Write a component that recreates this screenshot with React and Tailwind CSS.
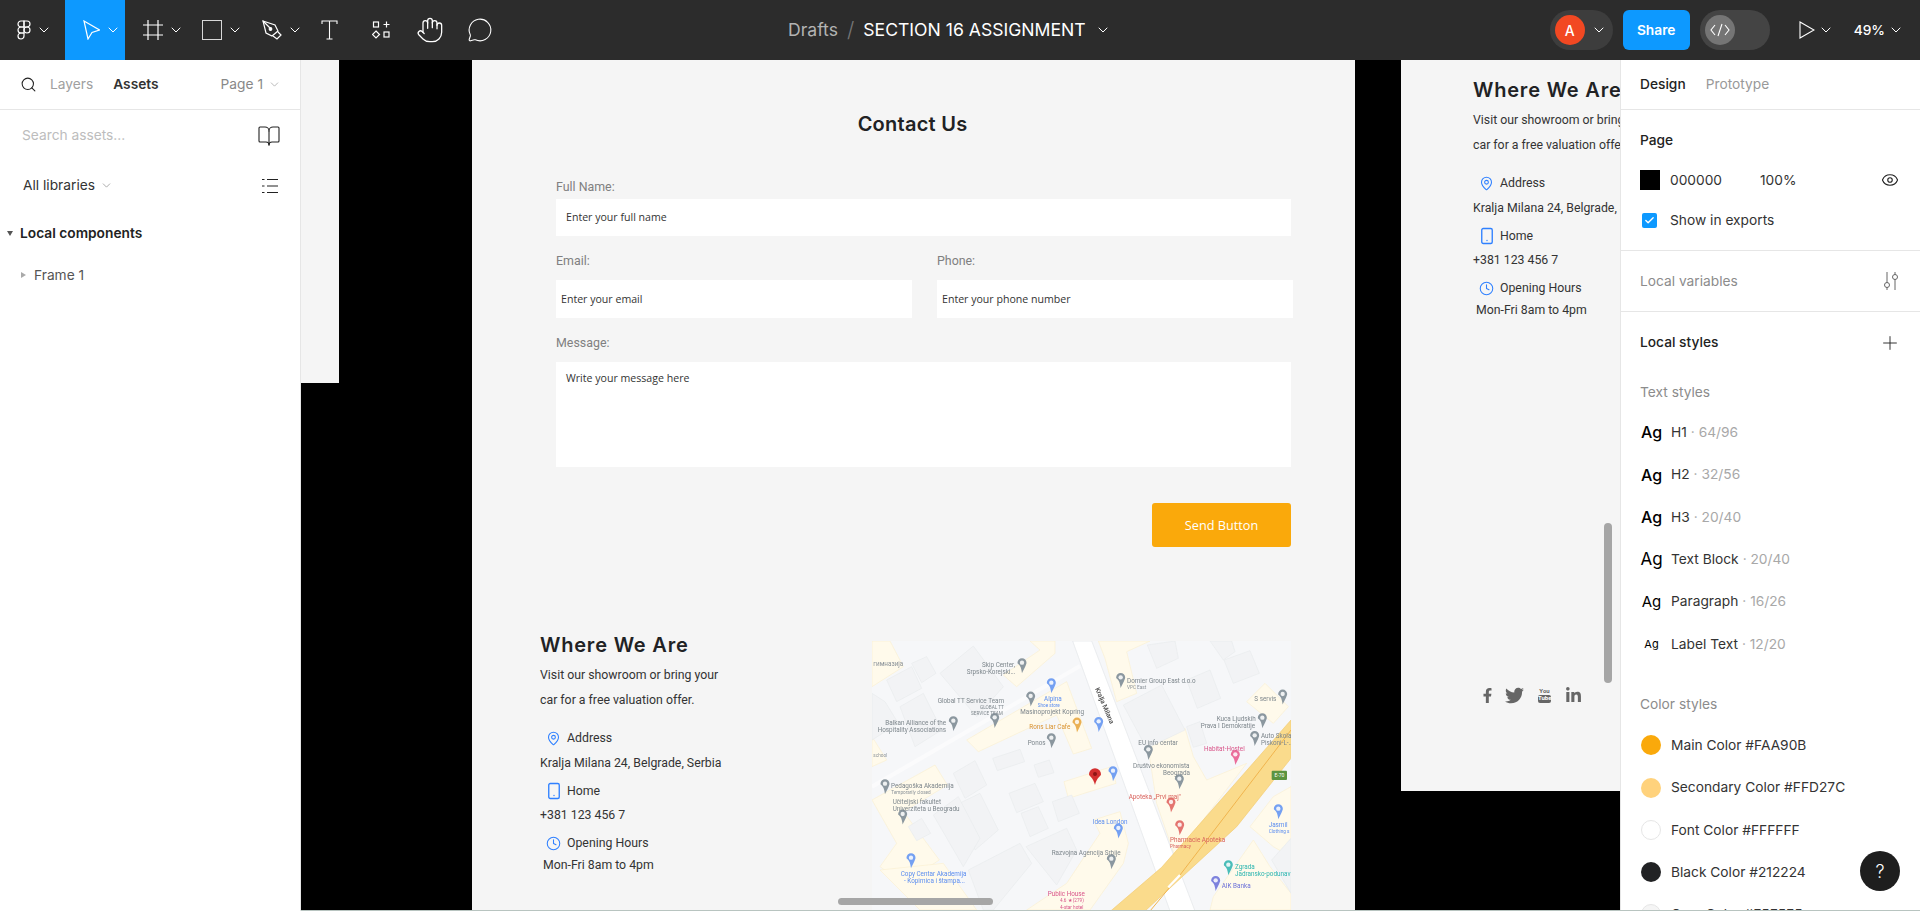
import React from 'react';
import { ChevronDown, Clock, MapPin, Smartphone, Search, Hand, MessageCircle, Plus, Eye, Check, BookOpen } from 'lucide-react';
import { FaFacebookF, FaTwitter, FaLinkedinIn } from 'react-icons/fa';

const yellowAreas = [
    '36,33 90,33 130,110 36,170',
    '430,135 540,60 510,33 585,33 585,70 470,170',
    '320,330 620,155 695,355 640,372 590,255 355,365',
    '715,33 870,33 800,65 830,190 770,215 735,85',
    '865,355 975,295 1000,380 1040,450 1160,400 945,680 890,520',
    '1160,215 1215,160 1285,230 1240,280',
    '36,510 225,405 262,465 130,545 238,690 130,760 60,710 110,640',
    '60,720 250,700 350,840 180,840',
    '500,840 620,760 720,610 700,570 780,545 805,640 790,700 690,840',
    '612,455 755,410 768,460 625,505',
    '1170,590 1240,500 1293,470 1293,680 1240,650',
    '1060,800 1180,630 1230,710 1293,790 1293,840 1050,840',
    '36,320 80,390 36,410',
];

const buildings = [
    '80,150 155,110 185,175 110,215',
    '155,100 200,80 228,130 185,158',
    '240,130 340,48 430,170 350,260',
    '36,190 75,215 115,280 36,330',
    '120,230 190,190 245,300 165,350',
    '398,385 480,358 494,395 412,422',
    '522,405 568,390 582,428 535,442',
    '280,430 345,392 380,465 315,505',
    '447,490 525,460 550,515 470,548',
    '298,520 360,490 415,600 345,660',
    '220,555 295,500 360,625 310,710',
    '483,550 535,530 565,595 510,620',
    '577,515 635,495 658,550 595,575',
    '145,590 185,565 212,610 170,632',
    '498,650 620,595 650,660 590,765',
    '325,720 480,640 515,700 400,840 370,840',
    '790,225 905,165 975,300 860,355',
    '980,290 1020,275 1040,340 1000,352',
    '980,150 1050,120 1082,205 1012,235',
    '862,45 945,33 955,85 890,115',
    '1092,90 1170,62 1198,130 1120,160',
    '1050,33 1115,33 1125,65 1090,90',
    '1235,690 1293,625 1293,790',
];

const mapPins = [
    { x: 486, y: 112, color: '#8b979f' },
    { x: 574, y: 172, color: '#74a0f2' },
    { x: 512, y: 212, color: '#8b979f' },
    { x: 404, y: 276, color: '#8b979f' },
    { x: 280, y: 286, color: '#8b979f' },
    { x: 651, y: 290, color: '#eab054' },
    { x: 716, y: 288, color: '#74a0f2' },
    { x: 574, y: 337, color: '#8b979f' },
    { x: 782, y: 156, color: '#8b979f' },
    { x: 1268, y: 206, color: '#8b979f' },
    { x: 1207, y: 277, color: '#8b979f' },
    { x: 1184, y: 330, color: '#8b979f' },
    { x: 1126, y: 387, color: '#ea6d9a' },
    { x: 865, y: 372, color: '#8b979f' },
    { x: 958, y: 460, color: '#8b979f' },
    { x: 759, y: 436, color: '#74a0f2' },
    { x: 933, y: 530, color: '#e4746f' },
    { x: 959, y: 598, color: '#e4746f' },
    { x: 1255, y: 550, color: '#74a0f2' },
    { x: 775, y: 608, color: '#74a0f2' },
    { x: 75, y: 475, color: '#8b979f' },
    { x: 128, y: 566, color: '#8b979f' },
    { x: 153, y: 697, color: '#74a0f2' },
    { x: 754, y: 700, color: '#8b979f' },
    { x: 1105, y: 718, color: '#49bdb9' },
    { x: 1067, y: 765, color: '#7d82dd' },
];

const mapLabels = [
    { x: 40, y: 107, text: 'гимназија', color: '#8a9299' },
    { x: 366, y: 110, text: 'Skip Center,', color: '#7d868c' },
    { x: 320, y: 131, text: 'Srpsko-Korejski...', color: '#7d868c' },
    { x: 801, y: 158, text: 'Domier Group East d.o.o', color: '#7d868c' },
    { x: 801, y: 176, text: 'VPC East', color: '#8a9299', small: true },
    { x: 552, y: 214, text: 'Alpina', color: '#5b8df0' },
    { x: 533, y: 231, text: 'Shoe store', color: '#5b8df0', small: true },
    { x: 233, y: 220, text: 'Global TT Service Team', color: '#7d868c' },
    { x: 360, y: 238, text: 'GLOBAL TT', color: '#7d868c', small: true },
    { x: 333, y: 254, text: 'SERVICE TEAM', color: '#7d868c', small: true },
    { x: 481, y: 253, text: 'Masinoprojekt Kopring', color: '#7d868c' },
    { x: 76, y: 284, text: 'Balkan Alliance of the', color: '#7d868c' },
    { x: 53, y: 305, text: 'Hospitality Associations', color: '#7d868c' },
    { x: 508, y: 298, text: 'Rons Liar Cafe', color: '#d9922e' },
    { x: 503, y: 344, text: 'Ponos', color: '#7d868c' },
    { x: 1183, y: 214, text: 'S servis', color: '#7d868c' },
    { x: 1070, y: 274, text: 'Kuca Ljudskih', color: '#7d868c' },
    { x: 1022, y: 295, text: 'Prava I Demokratije', color: '#7d868c' },
    { x: 1203, y: 325, text: 'Auto Skola', color: '#7d868c' },
    { x: 1203, y: 346, text: 'Piskoni-L-...', color: '#7d868c' },
    { x: 835, y: 346, text: 'EU info centar', color: '#7d868c' },
    { x: 1032, y: 362, text: 'Habitat-Hostel', color: '#d9558a' },
    { x: 40, y: 380, text: 'school', color: '#8a9299', small: true },
    { x: 819, y: 414, text: 'Društvo ekonomista', color: '#7d868c' },
    { x: 909, y: 435, text: 'Beograda', color: '#7d868c' },
    { x: 93, y: 475, text: 'Pedagoška Akademija', color: '#7d868c' },
    { x: 94, y: 493, text: 'Temporarily closed', color: '#8a9299', small: true },
    { x: 806, y: 506, text: 'Apoteka „Prvi maj"', color: '#d9625c' },
    { x: 98, y: 521, text: 'Učiteljski fakultet', color: '#7d868c' },
    { x: 98, y: 542, text: 'Univerziteta u Beogradu', color: '#7d868c' },
    { x: 698, y: 583, text: 'Idea London', color: '#5b8df0' },
    { x: 1226, y: 590, text: 'Jasmil', color: '#5b8df0' },
    { x: 1226, y: 608, text: 'Clothing s', color: '#5b8df0', small: true },
    { x: 930, y: 636, text: 'Pharmacie Apoteka', color: '#d9625c' },
    { x: 930, y: 654, text: 'Pharmacy', color: '#d9625c', small: true },
    { x: 575, y: 675, text: 'Razvojna Agencija Srbije', color: '#7d868c' },
    { x: 1125, y: 717, text: 'Zgrada', color: '#2bb5b0' },
    { x: 1125, y: 737, text: 'Jadransko-podunav', color: '#2bb5b0' },
    { x: 122, y: 738, text: 'Copy Centar Akademija', color: '#5b8df0' },
    { x: 132, y: 759, text: '- Kopirnica i štampa...', color: '#5b8df0' },
    { x: 1085, y: 773, text: 'AIK Banka', color: '#6a6fd8' },
    { x: 563, y: 797, text: 'Public House', color: '#d9558a' },
    { x: 600, y: 817, text: '4.6 ★ (279)', color: '#d9558a', small: true },
    { x: 600, y: 836, text: '4-star hotel', color: '#d9558a', small: true },
];

const textStyles = [
    { name: 'H1', size: '64/96', ag: 'text-[16px] font-medium' },
    { name: 'H2', size: '32/56', ag: 'text-[16px] font-medium' },
    { name: 'H3', size: '20/40', ag: 'text-[16px] font-medium' },
    { name: 'Text Block', size: '20/40', ag: 'text-[17px]' },
    { name: 'Paragraph', size: '16/26', ag: 'text-[15px]' },
    { name: 'Label Text', size: '12/20', ag: 'text-[11px]' },
];

const colorStyles = [
    { name: 'Main Color #FAA90B', swatch: 'bg-[#faa90b]' },
    { name: 'Secondary Color #FFD27C', swatch: 'bg-[#ffd27c]' },
    { name: 'Font Color #FFFFFF', swatch: 'bg-white border border-[#e6e6e6]' },
    { name: 'Black Color #212224', swatch: 'bg-[#212224]' },
    { name: 'Gray Color #F5F5F5', swatch: 'bg-[#f5f5f5] border border-[#e6e6e6]' },
];

function Chevron({ size = 16, className = 'text-white' }) {
    return <ChevronDown size={size} strokeWidth={1.500} className={className} />;
}

function FigmaLogo() {
    return (
        <svg width="14" height="21" viewBox="0 0 14 21" fill="none" stroke="white" strokeWidth="1.2">
            <path d="M7 1H4a3 3 0 0 0 0 6h3z" />
            <path d="M7 1h3a3 3 0 0 1 0 6H7z" />
            <path d="M7 7H4a3 3 0 0 0 0 6h3z" />
            <circle cx="10" cy="10" r="3" />
            <path d="M7 13H4a3 3 0 1 0 3 3z" />
        </svg>
    );
}

function CursorIcon() {
    return (
        <svg width="17" height="20" viewBox="0 0 17 20" fill="none" stroke="white" strokeWidth="1.2">
            <path d="M1 1 16.500 10 9 12.500 5 19z" />
        </svg>
    );
}

function FrameIcon() {
    return (
        <svg width="20" height="20" viewBox="0 0 20 20" fill="none" stroke="white" strokeWidth="1.2">
            <path d="M5 0v20M15 0v20M0 5h20M0 15h20" />
        </svg>
    );
}

function PenIcon() {
    return (
        <svg width="20" height="20" viewBox="0 0 20 20" fill="none" stroke="white" strokeWidth="1.2">
            <path d="M1 1 13 5l3 6-6 5-6-3z" />
            <path d="M1 1l7 7" />
            <circle cx="8.500" cy="9" r="1.300" fill="white" />
            <path d="M16 12l3 3-4 4-4-3" />
        </svg>
    );
}

function TextIcon() {
    return (
        <svg width="17" height="20" viewBox="0 0 17 20" fill="none" stroke="white" strokeWidth="1.1">
            <path d="M1 4V1h15v3M8.500 1v18M5.500 19h6" />
        </svg>
    );
}

function ResourcesIcon() {
    return (
        <svg width="19" height="19" viewBox="0 0 19 19" fill="none" stroke="white" strokeWidth="1.2">
            <rect x="1.500" y="1" width="5" height="5" />
            <path d="M14.500 0.500v6M11.500 3.500h6" />
            <path d="M4 10l3.500 3.500L4 17 0.500 13.500z" />
            <rect x="12" y="11" width="5" height="5" />
        </svg>
    );
}

function ToolButton({ children, chevron, active, className = '' }) {
    return (
        <div className={`h-full flex items-center ${chevron ? 'pl-[17px] gap-[5px]' : 'justify-center'} ${active ? 'bg-[#0d99ff]' : ''} ${className}`}>
            {children}
            {chevron && <Chevron />}
        </div>
    );
}

function Toolbar() {
    return (
        <div className="h-[60px] bg-[#2c2c2c] flex items-center text-white font-['Inter',sans-serif] shrink-0">
            <div className="flex h-full w-[788px] shrink-0">
                <ToolButton chevron className="w-[65px]"><FigmaLogo /></ToolButton>
                <ToolButton chevron active className="w-[60px] pl-[18px]"><CursorIcon /></ToolButton>
                <ToolButton chevron className="w-[60px] pl-[18px]"><FrameIcon /></ToolButton>
                <ToolButton chevron className="w-[60px] pl-[16px]"><span className="block w-[20px] h-[20px] border border-[#d8d8d8]" /></ToolButton>
                <ToolButton chevron className="w-[60px]"><PenIcon /></ToolButton>
                <ToolButton className="w-[48px]"><TextIcon /></ToolButton>
                <ToolButton className="w-[56px]"><ResourcesIcon /></ToolButton>
                <ToolButton className="w-[42px]"><Hand size={28} strokeWidth={1.1} /></ToolButton>
                <ToolButton className="w-[58px]"><MessageCircle size={26} strokeWidth={1} /></ToolButton>
            </div>
            <div className="flex items-center text-[17.600px]">
                <span className="text-[#b3b3b3]">Drafts</span>
                <span className="text-[#777] mx-[9px] text-[21px] font-light">/</span>
                <span>SECTION 16 ASSIGNMENT</span>
                <span className="ml-[9px]"><Chevron /></span>
            </div>
            <div className="ml-auto flex items-center">
                <div className="w-[63px] h-[40px] rounded-full bg-[#3d3d3d] flex items-center pl-[5px]">
                    <div className="w-[30px] h-[30px] rounded-full bg-[#f24822] flex items-center justify-center text-[14px] font-medium">A</div>
                    <span className="ml-[6px]"><Chevron /></span>
                </div>
                <div className="ml-[10px] w-[67px] h-[40px] rounded-[6px] bg-[#0d99ff] flex items-center justify-center text-[13.750px] font-semibold">Share</div>
                <div className="ml-[10px] w-[70px] h-[40px] rounded-full bg-[#444] flex items-center pl-[5px]">
                    <div className="w-[30px] h-[30px] rounded-full bg-[#757575] flex items-center justify-center">
                        <svg width="20" height="14" viewBox="0 0 20 14" fill="none" stroke="white" strokeWidth="1.1">
                            <path d="M5 2 1 7l4 5M15 2l4 5-4 5M12 1 8 13" />
                        </svg>
                    </div>
                </div>
                <svg className="ml-[29px]" width="16" height="18" viewBox="0 0 16 18" fill="none" stroke="white" strokeWidth="1.1">
                    <path d="M1 1v16l14-8z" />
                </svg>
                <span className="ml-[3px]"><Chevron /></span>
                <span className="ml-[20px] text-[13.750px] font-medium">49%</span>
                <span className="ml-[3px] mr-[16px]"><Chevron /></span>
            </div>
        </div>
    );
}

function LeftPanel() {
    return (
        <aside className="w-[301px] shrink-0 bg-white border-r border-[#e6e6e6] font-['Inter',sans-serif] text-[13.750px] z-10">
            <div className="h-[50px] border-b border-[#e6e6e6] flex items-center pl-[20px] pr-[19px]">
                <Search size={17} strokeWidth={1.500} className="text-[#222]" />
                <span className="ml-[13px] text-[#a0a0a0]">Layers</span>
                <span className="ml-[20px] font-semibold text-[#333]">Assets</span>
                <span className="ml-auto text-[#888]">Page 1</span>
                <span className="ml-[5px]"><Chevron size={13} className="text-[#aaa]" /></span>
            </div>
            <div className="h-[51px] flex items-center pl-[22px] pr-[19px]">
                <span className="text-[#bdbdbd]">Search assets...</span>
                <BookOpen size={24} strokeWidth={1.100} className="ml-auto text-[#222]" />
            </div>
            <div className="h-[49px] flex items-center pl-[23px] pr-[22px]">
                <span className="text-[#333]">All libraries</span>
                <span className="ml-[5px]"><Chevron size={13} className="text-[#999]" /></span>
                <svg className="ml-auto" width="16" height="16" viewBox="0 0 16 16" stroke="#222" strokeWidth="1" fill="none">
                    <path d="M5 1.500h11M5 8h11M5 14.500h11M0 1.500h2.500M0 8h2.500M0 14.500h2.500" />
                </svg>
            </div>
            <div className="h-[46px] flex items-center pl-[7px] font-semibold text-[#222]">
                <span className="w-0 h-0 border-x-[3.500px] border-x-transparent border-t-[5px] border-t-[#555] mr-[7px]" />
                Local components
            </div>
            <div className="h-[38px] flex items-center pl-[21px] text-[#555]">
                <span className="w-0 h-0 border-y-[3.500px] border-y-transparent border-l-[5px] border-l-[#aaa] mr-[8px]" />
                Frame 1
            </div>
        </aside>
    );
}

function Field({ label, placeholder, inputClass }) {
    return (
        <div>
            <div className="text-[12.400px] leading-[16px] text-[#808080] font-['Roboto',sans-serif]">{label}</div>
            <div className={`bg-white flex text-[10.600px] text-[#333] font-['Open_Sans',sans-serif] ${inputClass}`}>{placeholder}</div>
        </div>
    );
}

function ContactInfo() {
    const row = 'h-[20px] flex items-center pl-[6px] gap-[6px]';
    return (
        <div className="font-['Roboto',sans-serif] text-[12.300px] text-[#333] whitespace-nowrap">
            <h3 className="h-[26px] leading-[26px] text-[20px] tracking-[0.800px] font-semibold text-[#212224] font-['Inter',sans-serif]">Where We Are</h3>
            <p className="mt-[5px] leading-[25px]">Visit our showroom or bring your<br />car for a free valuation offer.</p>
            <div className={`mt-[15px] ${row}`}>
                <MapPin size={15} strokeWidth={1.700} className="text-[#2f80ff]" />
                Address
            </div>
            <div className="mt-[5px] leading-[20px]">Kralja Milana 24, Belgrade, Serbia</div>
            <div className={`mt-[8px] ${row}`}>
                <Smartphone size={18} strokeWidth={1.800} className="text-[#2f80ff] -mx-[1.500px]" />
                Home
            </div>
            <div className="mt-[4px] leading-[20px]">+381 123 456 7</div>
            <div className={`mt-[8px] ${row}`}>
                <Clock size={15} strokeWidth={1.700} className="text-[#2f80ff]" />
                Opening Hours
            </div>
            <div className="mt-[2px] ml-[3px] leading-[20px]">Mon-Fri 8am to 4pm</div>
        </div>
    );
}

function MapPinMark({ x, y, color }) {
    return (
        <g transform={`translate(${x} ${y})`}>
            <path d="M0 22C-4-12-15-6-15-13a15 15 0 1 1 30 0C15-6 4 12 0 22z" fill={color} transform="translate(0 -2) scale(0.9)" />
            <circle cx="0" cy="-14" r="6.500" fill="white" opacity="0.85" />
        </g>
    );
}

function MapView() {
    return (
        <div className="w-[419px] h-[270px] shrink-0 mt-[9px] overflow-hidden">
            <svg className="block blur-[0.400px]" width="419" height="270" viewBox="36 33 1257 810">
                <rect x="36" y="33" width="1257" height="810" fill="#f6f7f9" />
                {yellowAreas.map((points) => (
                    <polygon key={points} points={points} fill="#fffaeb" stroke="#faf0d2" strokeWidth="2" />
                ))}
                <path d="M36 470 660 108" stroke="#fbfbfc" strokeWidth="12" fill="none" />
                {buildings.map((points) => (
                    <polygon key={points} points={points} fill="#f2f3f5" stroke="#e9ebed" strokeWidth="2" />
                ))}
                <polygon points="638,33 695,33 1005,843 930,843" fill="white" stroke="#e3e5e9" strokeWidth="2" />
                <polygon points="1293,270 905,712 752,843 855,843 1130,590 1293,385" fill="#fadb8c" stroke="#f3cc72" strokeWidth="2" />
                <path d="M1293 300 960 735 870 843" stroke="#f0b44e" strokeWidth="3" fill="none" />
                <path d="M925 772 960 735" stroke="white" strokeWidth="7" fill="none" />
                <rect x="1235" y="422" width="46" height="28" rx="3" fill="#5c9440" />
                <text x="1258" y="442" textAnchor="middle" fontSize="15" fill="white" className="font-['Roboto',sans-serif]">E-70</text>
                {mapPins.map((pin) => (
                    <MapPinMark key={`${pin.x}-${pin.y}`} {...pin} />
                ))}
                <path d="M705 465c-5-22-18-26-18-32a18 18 0 1 1 36 0c0 6-13 10-18 32z" fill="#d32f2f" />
                <circle cx="705" cy="432" r="6" fill="#8e1515" />
                <text x="0" y="0" fontSize="20" fill="#444" transform="translate(705 176) rotate(67)" className="font-['Roboto',sans-serif] font-medium">Kralja Milana</text>
                {mapLabels.map((label) => (
                    <text key={label.text} x={label.x} y={label.y} fontSize={label.small ? 14 : 19} fill={label.color} className="font-['Roboto',sans-serif]">{label.text}</text>
                ))}
            </svg>
        </div>
    );
}

function MainFrame() {
    return (
        <div className="absolute left-[171px] top-0 w-[883px] h-[851px] bg-[#f5f5f5]">
            <h2 className="pt-[51px] pr-[2px] text-center text-[20px] leading-[26px] tracking-[0.250px] font-semibold text-[#212224] font-['Inter',sans-serif]">Contact Us</h2>
            <div className="ml-[84px] w-[737px]">
                <div className="mt-[42px]">
                    <Field label="Full Name:" placeholder="Enter your full name" inputClass="mt-[4px] w-[735px] h-[37px] items-center pl-[10px]" />
                </div>
                <div className="mt-[17px] flex gap-[25px]">
                    <div className="w-[356px]">
                        <Field label="Email:" placeholder="Enter your email" inputClass="mt-[11px] h-[38px] items-center pl-[5px] pt-[2px]" />
                    </div>
                    <div className="w-[356px]">
                        <Field label="Phone:" placeholder="Enter your phone number" inputClass="mt-[11px] h-[38px] items-center pl-[5px] pt-[2px]" />
                    </div>
                </div>
                <div className="mt-[17px]">
                    <Field label="Message:" placeholder="Write your message here" inputClass="mt-[11px] w-[735px] h-[105px] pl-[10px] pt-[9px]" />
                </div>
                <div className="mt-[36px] w-[735px] flex justify-end">
                    <button className="w-[139px] h-[44px] pt-[1px] rounded-[3px] bg-[#faa90b] text-white text-[12.700px] font-['Open_Sans',sans-serif]">Send Button</button>
                </div>
            </div>
            <div className="mt-[85px] ml-[68px] flex justify-between w-[751px]">
                <ContactInfo />
                <MapView />
            </div>
        </div>
    );
}

function SideFrame() {
    return (
        <div className="absolute left-[1100px] top-0 w-[219px] h-[731px] bg-[#f5f5f5] pl-[72px] pt-[17px] overflow-hidden">
            <ContactInfo />
            <div className="mt-[366px] flex items-center text-[#666]">
                <FaFacebookF size={15} className="ml-[7px]" />
                <FaTwitter size={19} className="ml-[10px]" />
                <div className="ml-[14px] w-[13px] flex flex-col items-center font-['Roboto',sans-serif] font-bold leading-none">
                    <span className="text-[6px] h-[7px]">You</span>
                    <span className="w-[13px] h-[8px] rounded-[2px] bg-[#666] text-white text-[6px] text-center">Tube</span>
                </div>
                <FaLinkedinIn size={17} className="ml-[14px]" />
            </div>
        </div>
    );
}

function Canvas() {
    return (
        <main className="relative flex-1 bg-black overflow-hidden">
            <div className="absolute left-0 top-0 w-[38px] h-[323px] bg-[#f5f5f5]" />
            <MainFrame />
            <SideFrame />
            {/* canvas scrollbars */}
            <div className="absolute left-[537px] top-[838px] w-[155px] h-[7px] rounded-full bg-[#a6a6a6]" />
            <div className="absolute left-[1303px] top-[463px] w-[8px] h-[160px] rounded-full bg-[#a6a6a6]" />
        </main>
    );
}

function RightPanel() {
    return (
        <aside className="w-[300px] shrink-0 bg-white border-l border-[#e6e6e6] font-['Inter',sans-serif] text-[13.750px] text-[#333] relative overflow-hidden">
            <div className="h-[50px] border-b border-[#e6e6e6] flex items-center pl-[19px] gap-[20px]">
                <span className="font-medium text-[#222]">Design</span>
                <span className="text-[#999]">Prototype</span>
            </div>
            <div className="h-[141px] border-b border-[#e6e6e6] pl-[19px] pr-[21px]">
                <div className="h-[60px] flex items-center font-medium text-[#222]">Page</div>
                <div className="h-[20px] flex items-center">
                    <span className="w-[20px] h-[20px] bg-black" />
                    <span className="ml-[10px] w-[90px]">000000</span>
                    <span>100%</span>
                    <Eye size={18} strokeWidth={1.500} className="ml-auto text-[#222]" />
                </div>
                <div className="mt-[20px] h-[20px] flex items-center">
                    <span className="ml-[2px] w-[15px] h-[15px] rounded-[2px] bg-[#0d99ff] flex items-center justify-center">
                        <Check size={11} strokeWidth={3} className="text-white" />
                    </span>
                    <span className="ml-[13px]">Show in exports</span>
                </div>
            </div>
            <div className="h-[61px] border-b border-[#e6e6e6] flex items-center pl-[19px] pr-[21px] text-[#8c8c8c]">
                Local variables
                <svg className="ml-auto" width="16" height="18" viewBox="0 0 16 18" fill="none" stroke="#666" strokeWidth="1">
                    <path d="M4 0v11M4 15v3M12 0v3M12 7v11" />
                    <circle cx="4" cy="13" r="2.500" />
                    <circle cx="12" cy="5" r="2.500" />
                </svg>
            </div>
            <div className="h-[61px] flex items-center pl-[19px] pr-[19px] font-medium text-[#222]">
                Local styles
                <Plus size={22} strokeWidth={1} className="ml-auto" />
            </div>
            <div className="pl-[19px] pt-[9px] h-[30px] text-[#8c8c8c]">Text styles</div>
            <div className="mt-[8px]">
                {textStyles.map((style) => (
                    <div key={style.name} className="h-[42.400px] flex items-center pl-[19px]">
                        <span className={`w-[31px] text-center text-black -ml-[4px] mr-[4px] ${style.ag}`}>Ag</span>
                        <span>{style.name}</span>
                        <span className="text-[#a8a8a8] ml-[4px]">· {style.size}</span>
                    </div>
                ))}
            </div>
            <div className="pl-[19px] mt-[29px] h-[20px] text-[#8c8c8c]">Color styles</div>
            <div className="mt-[10px]">
                {colorStyles.map((style) => (
                    <div key={style.name} className="h-[42.200px] flex items-center pl-[20px]">
                        <span className={`w-[20px] h-[20px] rounded-full ${style.swatch}`} />
                        <span className="ml-[10px]">{style.name}</span>
                    </div>
                ))}
            </div>
            <div className="absolute left-[239px] top-[791px] w-[40px] h-[40px] rounded-full bg-[#1e1e1e] text-white text-[18px] flex items-center justify-center font-light">?</div>
        </aside>
    );
}

export default function App() {
    return (
        <div className="w-[1920px] h-[911px] overflow-hidden flex flex-col relative">
            <Toolbar />
            <div className="flex flex-1 min-h-0">
                <LeftPanel />
                <Canvas />
                <RightPanel />
            </div>
            <div className="absolute left-0 right-0 bottom-0 h-[1px] bg-[#b8c4c0]" />
        </div>
    );
}
